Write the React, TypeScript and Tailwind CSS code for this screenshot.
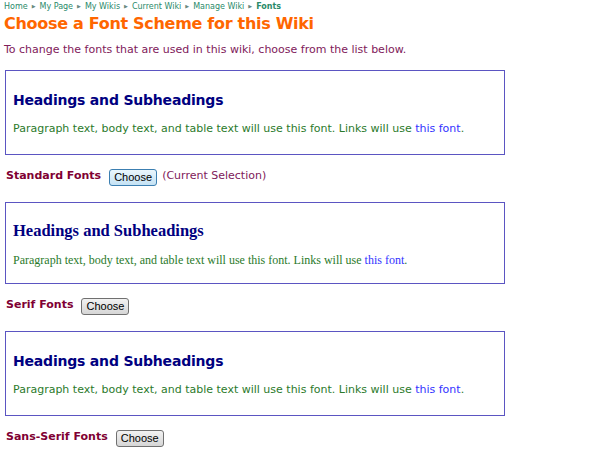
import React from 'react';

const crumbs = ['Home', 'My Page', 'My Wikis', 'Current Wiki', 'Manage Wiki'];

type Scheme = {
  label: string;
  font: string;
  headSize: string;
  bodySize: string;
  current?: boolean;
};

const schemes: Scheme[] = [
  { label: 'Standard Fonts', font: "font-['DejaVu_Sans',Verdana,sans-serif]", headSize: 'text-[14px] tracking-[-0.2px]', bodySize: 'text-[11px]', current: true },
  { label: 'Serif Fonts', font: "font-['Liberation_Serif',Georgia,serif]", headSize: 'text-[16.5px]', bodySize: 'text-[12px]' },
  { label: 'Sans-Serif Fonts', font: "font-['DejaVu_Sans',Verdana,sans-serif]", headSize: 'text-[14px] tracking-[-0.2px]', bodySize: 'text-[11px]' },
];

function ChooseButton({ active }: { active?: boolean }) {
  return (
    <button
      className={
        active
          ? "h-[17px] w-[48px] text-[11px] leading-none text-black rounded-[3px] border border-[#3c7fb1] bg-gradient-to-b from-[#eaf6fd] to-[#c4e2f4] font-['Liberation_Sans',Arial,sans-serif]"
          : "h-[17px] w-[48px] text-[11px] leading-none text-black rounded-[3px] border border-[#707070] bg-gradient-to-b from-[#f2f2f2] to-[#d6d6d6] font-['Liberation_Sans',Arial,sans-serif]"
      }
    >
      Choose
    </button>
  );
}

export default function App() {
  return (
    <div className="w-[600px] h-[456px] bg-white overflow-hidden font-['DejaVu_Sans',Verdana,sans-serif]">
      {/* breadcrumb */}
      <div className="flex items-center h-[14px] pl-[4px] text-[8px] text-[#2a8a6a]">
        {crumbs.map((c) => (
          <React.Fragment key={c}>
            <span>{c}</span>
            <span className="mx-[4px] text-[5px] text-[#6a8a80]">▶</span>
          </React.Fragment>
        ))}
        <span className="font-bold">Fonts</span>
      </div>

      <h1 className="pl-[4px] h-[20px] leading-[20px] text-[16px] font-bold text-[#ff6600] tracking-[-0.3px]">
        Choose a Font Scheme for this Wiki
      </h1>

      <p className="pl-[4px] mt-[7px] h-[18px] leading-[18px] text-[11px] text-[#80205a]">
        To change the fonts that are used in this wiki, choose from the list below.
      </p>

      <div className="mt-[11px]">
        {schemes.map((s, i) => (
          <div key={s.label} className={i > 0 ? 'mt-[17px]' : ''}>
            <div className={`ml-[5px] w-[500px] border border-[#5b55c2] pl-[7px] ${i === 1 ? 'pt-[18px] pb-[14px]' : 'pt-[19px] pb-[16px]'} ${s.font}`}>
              <h2 className={`h-[20px] leading-[20px] font-bold text-[#000080] ${s.headSize}`}>Headings and Subheadings</h2>
              <p className={`mt-[10px] h-[18px] leading-[18px] whitespace-nowrap text-[#2b7a2b] ${s.bodySize}`}>
                Paragraph text, body text, and table text will use this font. Links will use{' '}
                <a className="text-[#3333ff]">this font</a>.
              </p>
            </div>
            <div className="mt-[12px] h-[18px] flex items-center pl-[6px]">
              <span className="text-[11px] font-bold text-[#800033]">{s.label}</span>
              <span className="ml-[8px]"><ChooseButton active={s.current} /></span>
              {s.current && <span className="ml-[5px] text-[11px] text-[#80205a]">(Current Selection)</span>}
            </div>
          </div>
        ))}
      </div>
    </div>
  );
}
